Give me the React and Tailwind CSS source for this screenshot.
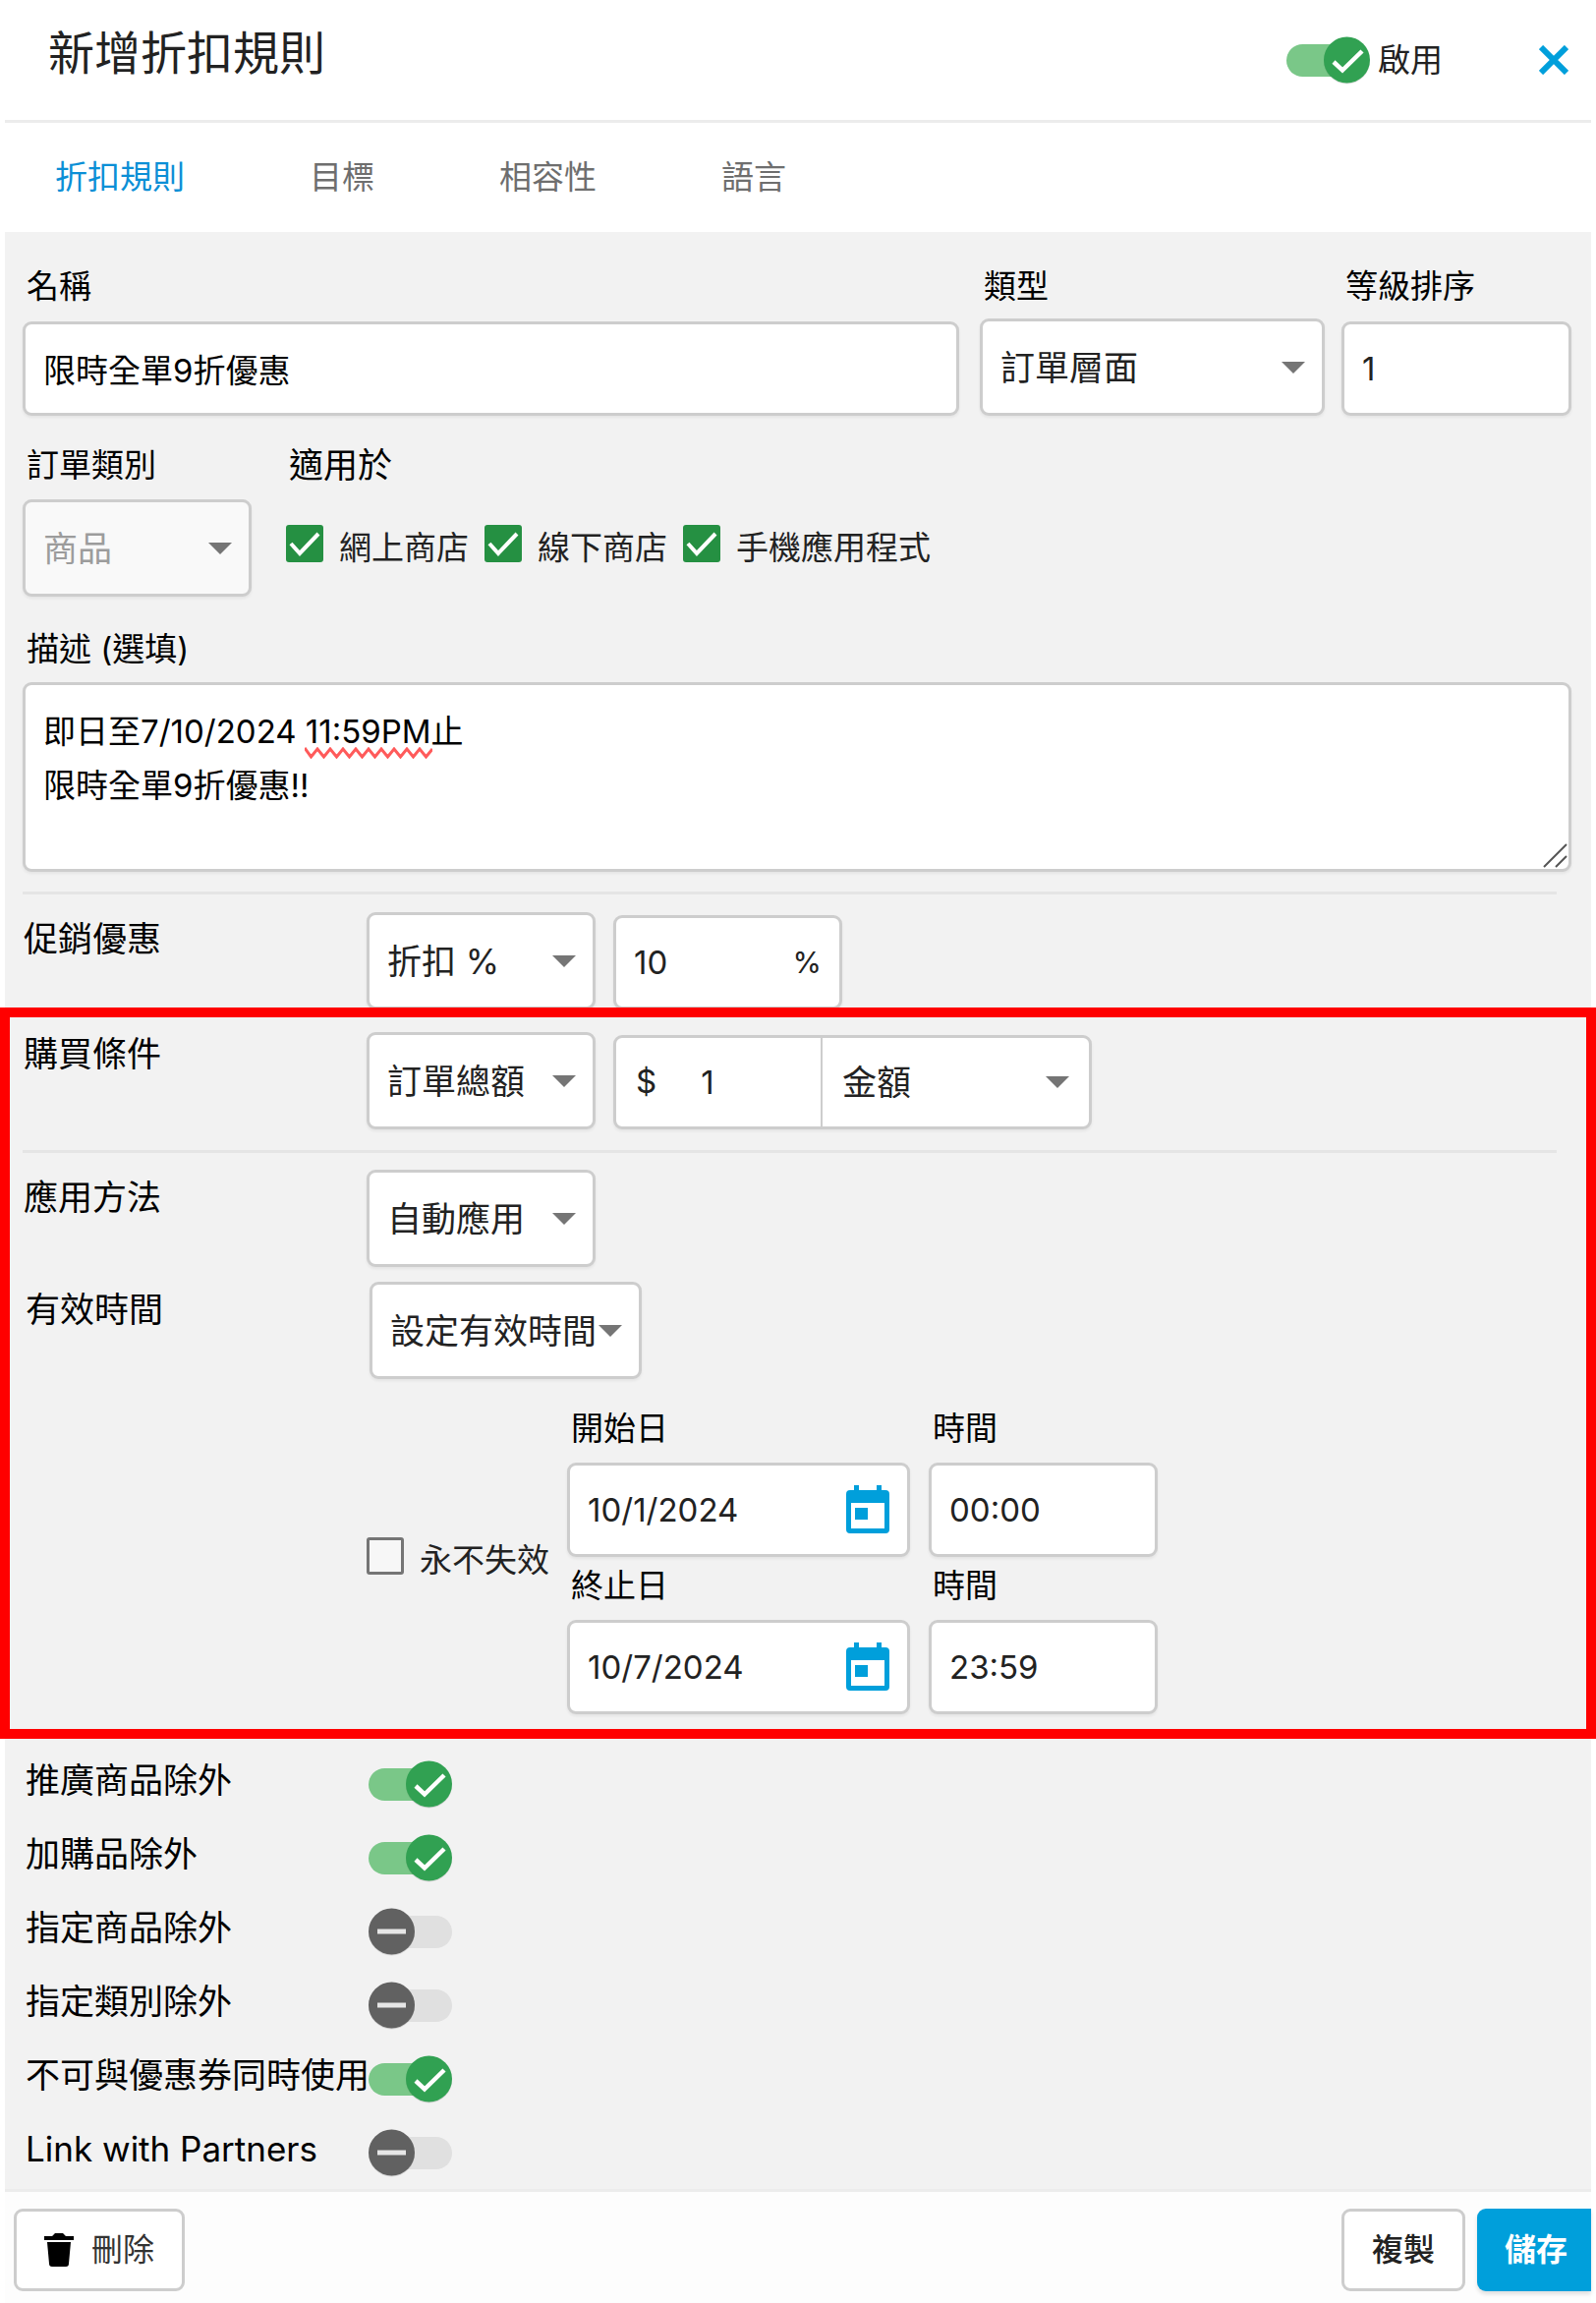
import React, { useState } from "react";

const fieldBox =
  "rounded-[9px] border-[3px] border-[#cdcdcd] shadow-[0_2px_3px_rgba(0,0,0,0.06)]";

function Select({ id, label, value, options, className = "w-[233px]", disabled = false }) {
  return (
    <div className={`relative shrink-0 ${className}`}>
      <select
        id={id}
        aria-label={label}
        defaultValue={value}
        disabled={disabled}
        className={`h-[99px] w-full appearance-none pl-[18px] text-[35px] leading-[44px] ${fieldBox} ${
          disabled ? "bg-[#f9f9f9] text-[#9c9c9c] opacity-100" : "bg-white text-[#222]"
        }`}
      >
        {(options || [value]).map((o) => (
          <option key={o}>{o}</option>
        ))}
      </select>
      <Arrow />
    </div>
  );
}

function Arrow() {
  return (
    <svg
      viewBox="0 0 24 12"
      className="pointer-events-none absolute top-1/2 right-5 h-3 w-6 -translate-y-1/2"
      aria-hidden="true"
    >
      <path d="M0 0h24L12 12z" fill="#757575" />
    </svg>
  );
}

function Toggle({ id, label, defaultOn }) {
  const [on, setOn] = useState(defaultOn);
  return (
    <span className="relative block h-[52px] w-[85px] shrink-0">
      <input
        id={id}
        type="checkbox"
        role="switch"
        aria-label={label}
        checked={on}
        onChange={() => setOn(!on)}
        className="absolute inset-0 z-10 h-full w-full cursor-pointer opacity-0"
      />
      {on ? (
        <svg viewBox="0 0 85 52" className="h-full w-full" aria-hidden="true">
          <rect x="0" y="10" width="80" height="33" rx="16.5" fill="#7ac788" />
          <circle cx="61.5" cy="27" r="23.5" fill="#000" opacity="0.12" />
          <circle cx="61.5" cy="26" r="23.5" fill="#31a152" />
          <path d="M48 28l9 8.5L77 17" fill="none" stroke="#fff" strokeWidth="4.5" />
        </svg>
      ) : (
        <svg viewBox="0 0 85 52" className="h-full w-full" aria-hidden="true">
          <rect x="5" y="10" width="80" height="33" rx="16.5" fill="#e0e0e0" />
          <circle cx="23.5" cy="27" r="23.5" fill="#000" opacity="0.12" />
          <circle cx="23.5" cy="26" r="23.5" fill="#616161" />
          <path d="M9 26h29" fill="none" stroke="#e6e6e6" strokeWidth="5" />
        </svg>
      )}
    </span>
  );
}

function Check({ id, label, defaultOn = false }) {
  const [on, setOn] = useState(defaultOn);
  return (
    <div className="flex items-center gap-4">
      <span className="relative block h-[38px] w-[38px] shrink-0">
        <input
          id={id}
          type="checkbox"
          checked={on}
          onChange={() => setOn(!on)}
          className={`block h-full w-full appearance-none rounded-[3px] ${
            on ? "bg-[#259042]" : "border-[3px] border-[#757575] bg-[#f7f7f7]"
          }`}
        />
        {on && (
          <svg viewBox="0 0 38 38" className="pointer-events-none absolute inset-0" aria-hidden="true">
            <path d="M5 19l9 10L33 9" fill="none" stroke="#fff" strokeWidth="4" />
          </svg>
        )}
      </span>
      <label htmlFor={id} className="pt-2 text-[33px] leading-10 whitespace-nowrap text-[#222]">
        {label}
      </label>
    </div>
  );
}

function FieldLabel({ htmlFor, children }) {
  return (
    <label htmlFor={htmlFor} className="block pl-[4px] text-[33px] leading-10 whitespace-nowrap">
      {children}
    </label>
  );
}

function RowLabel({ htmlFor, children, className = "" }) {
  return (
    <label htmlFor={htmlFor} className={`text-[35px] leading-10 whitespace-nowrap ${className}`}>
      {children}
    </label>
  );
}

function CalendarIcon() {
  return (
    <svg viewBox="0 0 44 50" className="h-[50px] w-11" aria-hidden="true">
      <path
        fillRule="evenodd"
        fill="#009fdb"
        d="M8 0h5v5h18V0h5v5h4a4 4 0 0 1 4 4v36a4 4 0 0 1-4 4H4a4 4 0 0 1-4-4V9a4 4 0 0 1 4-4h4zM5 18v26h34V18z"
      />
      <rect x="9" y="23" width="13" height="12" fill="#009fdb" />
    </svg>
  );
}

function DateRow({ id, title, date, time }) {
  return (
    <div className="flex gap-[19px]">
      <div className="w-[349px]">
        <FieldLabel htmlFor={`${id}-date`}>{title}</FieldLabel>
        <div className={`mt-[15px] flex h-24 items-center bg-white px-[18px] ${fieldBox}`}>
          <input
            id={`${id}-date`}
            defaultValue={date}
            className="h-full min-w-0 flex-1 text-[33px] text-[#222] outline-none"
          />
          <button type="button" aria-label={`選擇${title}`}>
            <CalendarIcon />
          </button>
        </div>
      </div>
      <div className="w-[233px]">
        <FieldLabel htmlFor={`${id}-time`}>時間</FieldLabel>
        <input
          id={`${id}-time`}
          defaultValue={time}
          className={`mt-[15px] block h-24 w-full bg-white px-[18px] text-[33px] text-[#222] ${fieldBox}`}
        />
      </div>
    </div>
  );
}

const tabs = ["折扣規則", "目標", "相容性", "語言"];

const exclusions = [
  { id: "promo", label: "推廣商品除外", on: true },
  { id: "addon", label: "加購品除外", on: true },
  { id: "items", label: "指定商品除外", on: false },
  { id: "category", label: "指定類別除外", on: false },
  { id: "coupon", label: "不可與優惠券同時使用", on: true },
  { id: "partners", label: "Link with Partners", on: false },
];

export default function App() {
  return (
    <form
      className="bg-white font-['Inter','Noto_Sans_CJK_TC',sans-serif] text-black"
      onSubmit={(e) => e.preventDefault()}
    >
      <header className="mx-[5px] flex items-center border-b-[3px] border-[#ececec] pr-[23px] pl-[44px]">
        <h1 className="pt-6 pb-[38px] text-[47px] leading-[60px] text-[#222]">新增折扣規則</h1>
        <div className="ml-auto flex items-center gap-2">
          <Toggle id="enabled" label="啟用" defaultOn />
          <label htmlFor="enabled" className="text-[33px] leading-10 text-[#222]">
            啟用
          </label>
        </div>
        <button type="button" aria-label="關閉" className="ml-[98px]">
          <svg viewBox="0 0 30 30" className="h-[30px] w-[30px]" aria-hidden="true">
            <path d="M2 2l26 26M28 2L2 28" stroke="#009fdb" strokeWidth="6" fill="none" />
          </svg>
        </button>
      </header>

      <nav className="mx-[5px] flex gap-[127px] px-[51px] py-[35px]">
        {tabs.map((t, i) => (
          <a
            key={t}
            href={`#tab-${i}`}
            className={`text-[33px] leading-[41px] ${i === 0 ? "text-[#0b8fd6]" : "text-[#6e6e6e]"}`}
          >
            {t}
          </a>
        ))}
      </nav>

      <section className="mx-[5px] bg-[#f2f2f2] pt-[35px] pr-5 pl-[18px]">
        <div className="flex">
          <div className="min-w-0 flex-1">
            <FieldLabel htmlFor="name">名稱</FieldLabel>
            <input
              id="name"
              defaultValue="限時全單9折優惠"
              className={`mt-4 h-24 w-full bg-white px-[18px] text-[33px] leading-10 ${fieldBox}`}
            />
          </div>
          <div className="ml-[21px]">
            <FieldLabel htmlFor="type">類型</FieldLabel>
            <div className="mt-[13px]">
              <Select id="type" value="訂單層面" className="w-[351px]" />
            </div>
          </div>
          <div className="ml-[17px] w-[234px]">
            <FieldLabel htmlFor="order">等級排序</FieldLabel>
            <input
              id="order"
              defaultValue="1"
              className={`mt-4 h-24 w-full bg-white px-[18px] text-[33px] text-[#222] ${fieldBox}`}
            />
          </div>
        </div>

        <div className="mt-[30px] flex gap-[35px]">
          <div>
            <FieldLabel htmlFor="order-category">訂單類別</FieldLabel>
            <div className="mt-[15px]">
              <Select id="order-category" value="商品" disabled />
            </div>
          </div>
          <fieldset>
            <legend className="pl-[3px] text-[35px] leading-10">適用於</legend>
            <div className="mt-[13px] flex h-[94px] items-center gap-4">
              <Check id="online" label="網上商店" defaultOn />
              <Check id="offline" label="線下商店" defaultOn />
              <Check id="mobile" label="手機應用程式" defaultOn />
            </div>
          </fieldset>
        </div>

        <div className="mt-[33px]">
          <FieldLabel htmlFor="description">描述 (選填)</FieldLabel>
          <div className="relative mt-[14px]">
            <textarea
              id="description"
              spellCheck={false}
              defaultValue={"即日至7/10/2024 11:59PM止\n限時全單9折優惠!!"}
              className={`block h-[193px] w-full resize-none bg-white px-[18px] py-5 text-[33px] leading-[55px] ${fieldBox}`}
            />
            <svg
              viewBox="0 0 130 12"
              className="pointer-events-none absolute top-[66px] left-[287px] h-3 w-[130px]"
              aria-hidden="true"
            >
              <path
                d="M0 1l6.500 9L13 2l6.500 8L26 2l6.500 8L39 2l6.500 8L52 2l6.500 8L65 2l6.500 8L78 2l6.500 8L91 2l6.500 8L104 2l6.500 8L117 2l6.500 8L130 2"
                fill="none"
                stroke="#ff5a5a"
                strokeWidth="3"
              />
            </svg>
            <svg
              viewBox="0 0 26 26"
              className="pointer-events-none absolute right-1 bottom-1 h-[26px] w-[26px]"
              aria-hidden="true"
            >
              <path d="M2 25L25 2M14 25L25 14" stroke="#555" strokeWidth="2" />
            </svg>
          </div>
        </div>

        <hr className="mt-5 mr-[15px] border-t-[3px] border-[#e5e5e5]" />

        <div className="mt-[18px] grid grid-cols-[350px_1fr]">
          <RowLabel htmlFor="offer" className="pt-[7px] pl-px">
            促銷優惠
          </RowLabel>
          <div className="flex items-end gap-[18px]">
            <Select id="offer" value="折扣 %" />
            <div
              className={`flex h-24 w-[233px] items-center bg-white px-[18px] text-[33px] text-[#222] ${fieldBox}`}
            >
              <input
                aria-label="折扣百分比"
                defaultValue="10"
                className="h-full min-w-0 flex-1 outline-none"
              />
              <span className="text-[30px]">%</span>
            </div>
          </div>
        </div>
      </section>

      <section className="relative -mt-[2px] border-[10px] border-[#ff0000] bg-[#f2f2f2] py-[15px] pl-[13px]">
        <div className="grid grid-cols-[350px_1fr]">
          <RowLabel htmlFor="condition" className="pt-[2px] pl-px">
            購買條件
          </RowLabel>
          <div className="flex items-end gap-[18px]">
            <Select id="condition" value="訂單總額" />
            <div className={`flex h-24 w-[487px] bg-white text-[33px] text-[#222] ${fieldBox}`}>
              <div className="flex w-[210px] items-center gap-[45px] border-r-2 border-[#cdcdcd] pl-5">
                <span>$</span>
                <input
                  aria-label="最低金額"
                  defaultValue="1"
                  className="h-full w-full min-w-0 flex-1 outline-none"
                />
              </div>
              <div className="relative flex-1">
                <select
                  aria-label="條件單位"
                  className="h-full w-full appearance-none pl-5 text-[35px] leading-[44px] outline-none"
                >
                  <option>金額</option>
                </select>
                <Arrow />
              </div>
            </div>
          </div>
        </div>

        <hr className="mt-[21px] mr-[30px] border-t-[3px] border-[#e5e5e5]" />

        <div className="mt-[17px] grid grid-cols-[350px_1fr]">
          <RowLabel htmlFor="method" className="pt-2 pl-px">
            應用方法
          </RowLabel>
          <Select id="method" value="自動應用" />
        </div>

        <div className="mt-[15px] grid grid-cols-[350px_1fr] pl-[3px]">
          <RowLabel htmlFor="period" className="pt-2">
            有效時間
          </RowLabel>
          <Select id="period" value="設定有效時間" className="w-[277px]" />
        </div>

        <div className="mt-[30px] flex items-center gap-[18px] pl-[350px]">
          <div className="w-[186px] pb-3">
            <Check id="never" label="永不失效" />
          </div>
          <div className="flex flex-col gap-[9px]">
            <DateRow id="start" title="開始日" date="10/1/2024" time="00:00" />
            <DateRow id="end" title="終止日" date="10/7/2024" time="23:59" />
          </div>
        </div>
      </section>

      <section className="mx-[5px] border-b-[3px] border-[#ececec] bg-[#f2f2f2] pt-2 pl-[21px]">
        {exclusions.map((x) => (
          <div key={x.id} className="grid h-[75px] grid-cols-[349px_1fr] items-center">
            <RowLabel htmlFor={x.id} className="pb-2">
              {x.label}
            </RowLabel>
            <Toggle id={x.id} label={x.label} defaultOn={x.on} />
          </div>
        ))}
      </section>

      <footer className="mx-[5px] flex gap-3 bg-[#fdfdfd] pt-[17px] pb-3 pl-[9px] text-[32px]">
        <button
          type="button"
          className="mr-auto flex h-[84px] items-center gap-[18px] rounded-[9px] border-[3px] border-[#cdcdcd] bg-white px-7 text-[#333]"
        >
          <svg viewBox="0 0 30 34" className="h-[34px] w-[30px]" aria-hidden="true">
            <path d="M0 3h8l3-3h8l3 3h8v4H0zM3 9h24l-2 22a3 3 0 0 1-3 3H8a3 3 0 0 1-3-3z" fill="#000" />
          </svg>
          刪除
        </button>
        <button
          type="button"
          className="h-[84px] w-[126px] rounded-[9px] border-[3px] border-[#cdcdcd] bg-white font-medium text-[#222]"
        >
          複製
        </button>
        <button
          type="submit"
          className="h-[84px] w-[116px] rounded-l-[9px] bg-[#009fdb] pl-1 font-bold text-white shadow-[0_3px_4px_rgba(0,0,0,0.12)]"
        >
          儲存
        </button>
      </footer>
    </form>
  );
}
